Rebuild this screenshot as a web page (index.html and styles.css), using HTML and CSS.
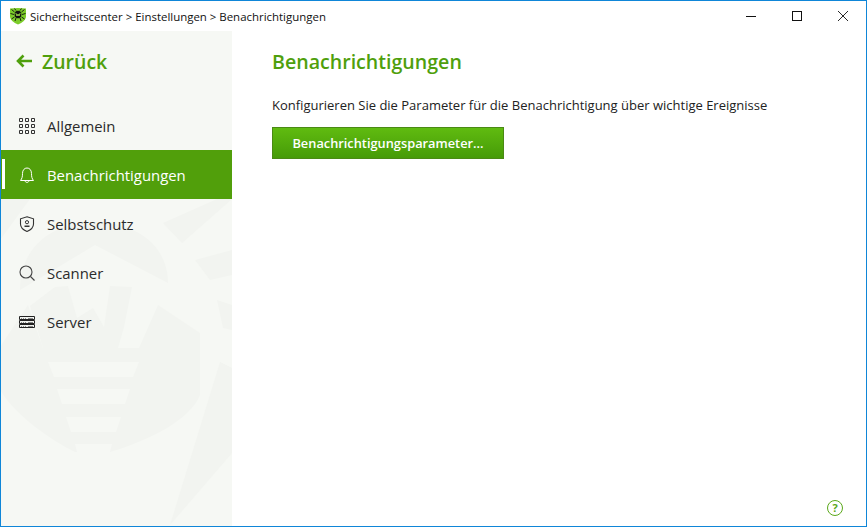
FILE: index.html
```html
<!DOCTYPE html>
<html lang="de">
<head>
    <meta charset="UTF-8">
    <meta name="viewport" content="width=device-width, initial-scale=1.0">
    <title>Benachrichtigungen</title>
    <link rel="stylesheet" href="styles.css">
</head>
<body>
    <div class="window">
        <!-- Title bar -->
        <div class="titlebar">
            <svg class="logo" width="18" height="18" viewBox="0 0 18 18">
                <path d="M1 1.5 Q9 0.5 17 1.5 L17 10 Q16 15 9 17.5 Q2 15 1 10 Z" fill="#7ccc2a"/>
                <ellipse cx="9" cy="7.5" rx="3.4" ry="3.8" fill="#111"/>
                <path d="M5.5 5 L2.5 2.5 M5 7.5 L1.5 6.5 M5.5 10 L2.5 12 M12.5 5 L15.5 2.5 M13 7.5 L16.5 6.5 M12.5 10 L15.5 12 M7 3.5 L5.5 1.5 M11 3.5 L12.5 1.5 M7 11 L6 14 M11 11 L12 14" stroke="#111" stroke-width="0.9" fill="none"/>
                <path d="M6.8 6 L8 9 L9 7 L10 9 L11.2 6" stroke="#a0e04a" stroke-width="0.9" fill="none"/>
            </svg>
            <span class="window-title">Sicherheitscenter &gt; Einstellungen &gt; Benachrichtigungen</span>
            <div class="controls">
                <div class="control">
                    <svg width="10" height="10" viewBox="0 0 10 10"><path d="M0 5.5H10" stroke="#111" fill="none"/></svg>
                </div>
                <div class="control">
                    <svg width="10" height="10" viewBox="0 0 10 10"><rect x="0.5" y="0.5" width="9" height="9" stroke="#111" fill="none"/></svg>
                </div>
                <div class="control">
                    <svg width="10" height="10" viewBox="0 0 10 10"><path d="M0 0L10 10M10 0L0 10" stroke="#111" stroke-width="0.9" fill="none"/></svg>
                </div>
            </div>
        </div>

        <div class="content">
            <!-- Sidebar -->
            <div class="sidebar">
                <svg class="watermark" width="231" height="495" viewBox="1 31 231 495">
                    <path d="M20 290 C20 245 55 222 95 222 C135 222 168 245 168 283 L95 245 Z"/>
                    <path d="M55 287 L68 286 L77 318 L93 308 L104 327 L110 286 L132 287 L124 327 L118 348 L43 348 L30 306 Z"/>
                    <path d="M0 347 L28 305 L43 348 L139 348 L158 305 L200 333 L200 395 C190 420 150 440 110 452 L75 452 C50 440 15 415 0 390 Z"/>
                    <path d="M220 362 L232 368 L232 453 L170 525 Z"/>
                    <path d="M163 223 L217 199 L232 199 L182 243 Z"/>
                    <path d="M195 260 L232 250 L232 275 L210 280 Z"/>
                    <path d="M217 300 L232 305 L232 330 L223 328 Z"/>
                    <path d="M0 199 L30 199 L0 240 Z"/>
                    <g class="stripes">
                        <path d="M48 362 L139 362 L133 377 L54 377 Z"/>
                        <path d="M57 389 L130 389 L125 404 L62 404 Z"/>
                        <path d="M66 417 L121 417 L116 432 L71 432 Z"/>
                        <path d="M75 444 L112 444 L110 452 L77 452 Z"/>
                    </g>
                </svg>

                <a class="back">
                    <svg width="16" height="14" viewBox="0 0 16 14"><path d="M7.5 1.5L2 7L7.5 12.5M2 7H16" stroke="#4f9f0c" stroke-width="2.6" fill="none"/></svg>
                    Zurück
                </a>

                <ul class="nav">
                    <li class="nav-item">
                        <svg width="16" height="16" viewBox="0 0 16 16" class="nav-icon">
                            <path d="M0.5 0.5h3v3h-3zM6.5 0.5h3v3h-3zM12.5 0.5h3v3h-3zM0.5 6.5h3v3h-3zM6.5 6.5h3v3h-3zM12.5 6.5h3v3h-3zM0.5 12.5h3v3h-3zM6.5 12.5h3v3h-3zM12.5 12.5h3v3h-3z" stroke="#333" fill="none"/>
                        </svg>
                        Allgemein
                    </li>
                    <li class="nav-item active">
                        <svg width="16" height="16" viewBox="0 0 16 16" class="nav-icon">
                            <path d="M1.5 13.5 C3 11.5 3.5 10 3.5 6.5 C3.5 3 5.5 1 8 1 C10.5 1 12.5 3 12.5 6.5 C12.5 10 13 11.5 14.5 13.5 Z M6 13.5 C6 16 10 16 10 13.5" stroke="#fff" fill="none"/>
                        </svg>
                        Benachrichtigungen
                    </li>
                    <li class="nav-item">
                        <svg width="16" height="16" viewBox="0 0 16 16" class="nav-icon">
                            <path d="M8 0.8 L14.5 2.8 V8 C14.5 11.5 11.5 14 8 15.5 C4.5 14 1.5 11.5 1.5 8 V2.8 Z" stroke="#333" stroke-width="1.1" fill="none"/>
                            <circle cx="8" cy="6.2" r="1.6" stroke="#333" fill="none"/>
                            <path d="M5.5 11 V9.5 H10.5 V11 Z" fill="#333"/>
                        </svg>
                        Selbstschutz
                    </li>
                    <li class="nav-item">
                        <svg width="16" height="16" viewBox="0 0 16 16" class="nav-icon">
                            <circle cx="7" cy="7" r="6" stroke="#444" stroke-width="1.1" fill="none"/>
                            <path d="M11.5 11.5L15.5 15.5" stroke="#444" stroke-width="1.1" fill="none"/>
                        </svg>
                        Scanner
                    </li>
                    <li class="nav-item">
                        <svg width="16" height="16" viewBox="0 0 16 16" class="nav-icon">
                            <path d="M0.5 2.5H15.5V5.5H0.5ZM0.5 6.5H15.5V9.5H0.5ZM0.5 10.5H15.5V13.5H0.5Z" stroke="#222" fill="none"/>
                            <path d="M2 4.5H3M4 4.5H5M6 4.5H7M9 4.5H14M2 8.5H3M4 8.5H5M6 8.5H7M9 8.5H14M2 12.5H3M4 12.5H5M6 12.5H7M9 12.5H14" stroke="#888" fill="none"/>
                        </svg>
                        Server
                    </li>
                </ul>
            </div>

            <!-- Main panel -->
            <div class="main">
                <h1>Benachrichtigungen</h1>
                <p class="description">Konfigurieren Sie die Parameter für die Benachrichtigung über wichtige Ereignisse</p>
                <button class="params-btn">Benachrichtigungsparameter...</button>
                <div class="help">?</div>
            </div>
        </div>
    </div>
</body>
</html>
```

FILE: styles.css
```css
* {
    box-sizing: border-box;
}

html, body {
    margin: 0;
    padding: 0;
    height: 100%;
    overflow: hidden;
}

body {
    font-family: "Open Sans", "Noto Sans", sans-serif;
    background-color: #fff;
    color: #222;
}

.window {
    display: flex;
    flex-direction: column;
    height: 527px;
    border: 1px solid #0f86d8;
    background-color: #fff;
}

.titlebar {
    display: flex;
    align-items: center;
    height: 30px;
    flex-shrink: 0;
    padding-left: 8px;
}

.logo {
    margin-right: 3px;
}

.window-title {
    font-size: 11.45px;
    color: #111;
}

.controls {
    display: flex;
    margin-left: auto;
}

.control {
    display: flex;
    align-items: center;
    justify-content: center;
    width: 46px;
    height: 30px;
}

.content {
    display: flex;
    flex: 1;
    min-height: 0;
}

.sidebar {
    position: relative;
    width: 231px;
    flex-shrink: 0;
    background-color: #f6f8f4;
    overflow: hidden;
}

.watermark {
    position: absolute;
    left: 0;
    top: 0;
    fill: #f2f4f0;
}

.watermark .stripes {
    fill: #f6f8f4;
}

.back {
    position: relative;
    display: flex;
    align-items: center;
    gap: 10px;
    height: 60px;
    padding-left: 15px;
    font-size: 19.5px;
    font-weight: 600;
    color: #4f9f0c;
}

.nav {
    position: relative;
    list-style: none;
    margin: 10px 0 0;
    padding: 0;
}

.nav-item {
    position: relative;
    display: flex;
    align-items: center;
    height: 49px;
    padding-left: 18px;
    font-size: 14.9px;
    color: #2b2b2b;
}

.nav-icon {
    margin-right: 12px;
}

.nav-item.active {
    background-color: #519f0b;
    color: #fff;
}

.nav-item.active::before {
    content: "";
    position: absolute;
    left: 1px;
    top: 9px;
    width: 3px;
    height: 30px;
    background-color: #fff;
}

.main {
    display: flex;
    flex-direction: column;
    align-items: flex-start;
    flex: 1;
    padding: 17px 23px 10px 40px;
}

h1 {
    margin: 0;
    font-size: 19.6px;
    line-height: 28px;
    font-weight: 600;
    color: #4f9f0c;
}

.description {
    margin: 20px 0 0;
    font-size: 13px;
    line-height: 18px;
    color: #222;
}

.params-btn {
    width: 232px;
    height: 32px;
    margin-top: 13px;
    padding: 0;
    font-family: inherit;
    font-size: 12.8px;
    font-weight: 600;
    color: #fff;
    border: 1px solid #4a8a14;
    background: linear-gradient(#60bb10, #469b08);
}

.help {
    align-self: flex-end;
    width: 16px;
    height: 16px;
    margin-top: auto;
    border: 1.5px solid #5aa81a;
    border-radius: 50%;
    font-size: 11px;
    font-weight: 700;
    line-height: 13px;
    text-align: center;
    color: #5aa81a;
}
```
